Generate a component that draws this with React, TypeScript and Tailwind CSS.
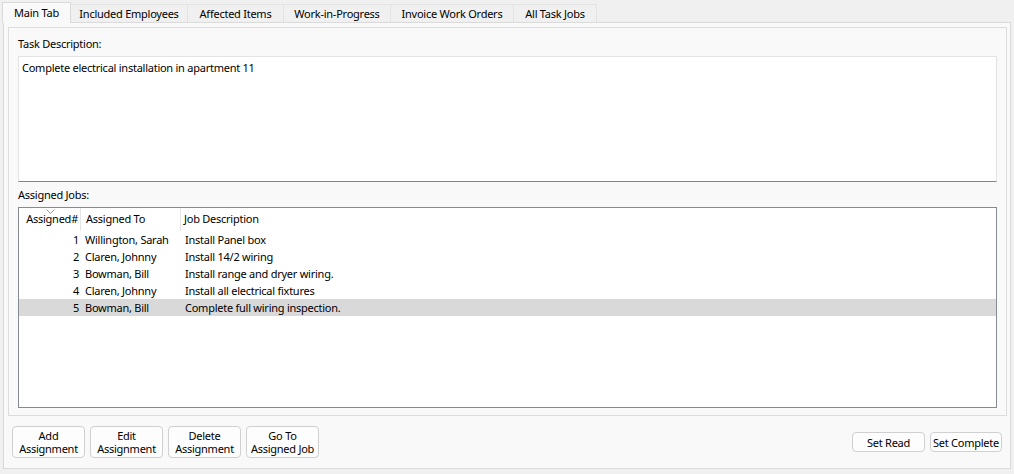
import React from 'react';

const tabs = [
  { label: 'Main Tab', w: 'w-[69px]' },
  { label: 'Included Employees', w: 'w-[117px]' },
  { label: 'Affected Items', w: 'w-[96px]' },
  { label: 'Work-in-Progress', w: 'w-[107px]' },
  { label: 'Invoice Work Orders', w: 'w-[123px]' },
  { label: 'All Task Jobs', w: 'w-[83px]' },
];

const jobs = [
  { n: 1, to: 'Willington, Sarah', desc: 'Install Panel box' },
  { n: 2, to: 'Claren, Johnny', desc: 'Install 14/2 wiring' },
  { n: 3, to: 'Bowman, Bill', desc: 'Install range and dryer wiring.' },
  { n: 4, to: 'Claren, Johnny', desc: 'Install all electrical fixtures' },
  { n: 5, to: 'Bowman, Bill', desc: 'Complete full wiring inspection.' },
];

function WinButton({ lines, className }: { lines: string[]; className: string }) {
  return (
    <button className={`bg-[#fdfdfd] border border-[#d0d0d0] rounded-[4px] text-black leading-[13px] whitespace-nowrap flex flex-col items-center justify-center ${className}`}>
      {lines.map((l) => (
        <span key={l}>{l}</span>
      ))}
    </button>
  );
}

export default function App() {
  const selected = 5;

  return (
    <div
      className="w-[1014px] h-[474px] bg-[#f0f0f0] text-[11px] tracking-[-0.25px] text-black overflow-hidden"
      style={{ fontFamily: '"Noto Sans", sans-serif' }}
    >
      {/* Tab strip */}
      <div className="flex items-start pl-[2px] pt-[2px] h-[23px]">
        {tabs.map((t, i) =>
          i === 0 ? (
            <div
              key={t.label}
              className={`${t.w} h-[21px] relative z-10 bg-[#f9f9f9] border border-b-0 border-[#d9d9d9] flex items-center justify-center leading-none whitespace-nowrap pb-px`}
            >
              {t.label}
            </div>
          ) : (
            <div
              key={t.label}
              className={`${t.w} h-[18px] mt-[2px] bg-[#f0f0f0] border border-b-0 border-l-0 border-[#e3e3e3] flex items-center justify-center leading-none whitespace-nowrap`}
            >
              {t.label}
            </div>
          )
        )}
      </div>

      {/* Tab page */}
      <div className="-mt-px ml-[3px] w-[1008px] h-[447px] border border-[#dadada] bg-[#f9f9f9] flex flex-col">
        <div className="ml-[4px] mt-[4px] w-[999px] h-[389px] border border-[#dcdcdc] flex flex-col pl-[9px] pt-[8px]">
          <div className="h-[16px] leading-[16px]">Task Description:</div>
          <div className="mt-[4px] w-[979px] h-[126px] bg-white border border-[#e3e3e3] border-b-[#858585] px-[3px] pt-[3px] leading-[16px]">
            Complete electrical installation in apartment 11
          </div>
          <div className="mt-[5px] h-[16px] leading-[16px]">Assigned Jobs:</div>
          <div className="mt-[4px] w-[979px] h-[201px] bg-white border border-[#868a91] flex flex-col">
            {/* Header */}
            <div className="flex h-[23px] relative">
              <svg className="absolute left-[27px] top-[1px]" width="9" height="5" viewBox="0 0 9 5">
                <path d="M0.5 0.5 L4.5 4.5 L8.5 0.5" fill="none" stroke="#9a9a9a" strokeWidth="1" />
              </svg>
              <div className="w-[62px] pr-[2px] text-right flex items-center justify-end border-r border-[#e5e5e5] whitespace-nowrap">Assigned#</div>
              <div className="w-[100px] pl-[5px] flex items-center border-r border-[#e5e5e5] whitespace-nowrap">Assigned To</div>
              <div className="flex-1 pl-[3px] flex items-center">Job Description</div>
            </div>
            {jobs.map((j) => (
              <div
                key={j.n}
                className={`flex h-[17px] items-center leading-[17px] ${j.n === selected ? 'bg-[#d9d9d9]' : ''}`}
              >
                <div className="w-[62px] pr-[2px] text-right">{j.n}</div>
                <div className="w-[100px] pl-[4px] whitespace-nowrap">{j.to}</div>
                <div className="flex-1 pl-[4px] whitespace-nowrap">{j.desc}</div>
              </div>
            ))}
          </div>
        </div>

        {/* Bottom buttons */}
        <div className="flex-1 flex items-center justify-between pl-[8px] pr-[8px]">
          <div className="flex gap-[5px]">
            <WinButton lines={['Add', 'Assignment']} className="w-[73px] h-[32px]" />
            <WinButton lines={['Edit', 'Assignment']} className="w-[73px] h-[32px]" />
            <WinButton lines={['Delete', 'Assignment']} className="w-[73px] h-[32px]" />
            <WinButton lines={['Go To', 'Assigned Job']} className="w-[73px] h-[32px]" />
          </div>
          <div className="flex gap-[5px]">
            <WinButton lines={['Set Read']} className="w-[73px] h-[20px]" />
            <WinButton lines={['Set Complete']} className="w-[72px] h-[20px]" />
          </div>
        </div>
      </div>
    </div>
  );
}
